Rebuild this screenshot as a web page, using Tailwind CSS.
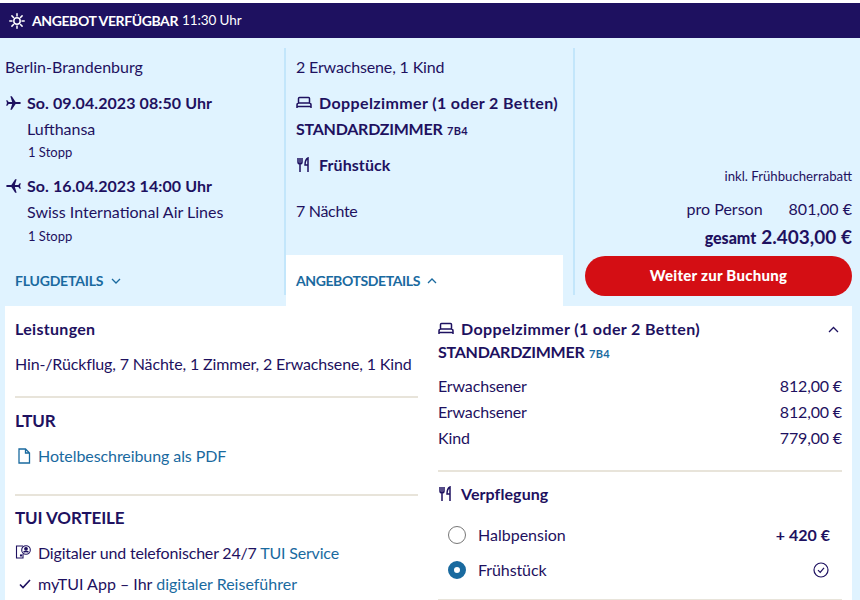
<!DOCTYPE html>
<html lang="de">
<head>
<meta charset="utf-8">
<script src="https://cdn.jsdelivr.net/npm/@tailwindcss/browser@4"></script>
</head>
<body class="bg-[#e0f3ff]">
<div class="w-[860px] h-[600px] overflow-hidden bg-[#e0f3ff] font-['Lato','Liberation_Sans',sans-serif] text-[16px] text-[#1e1160]">
  <div class="h-[3px] bg-white"></div>
  <div class="h-[35px] bg-[#1e1160] flex items-center pl-[9px] text-white text-[14px]">
    <svg class="w-[16px] h-[16px] mr-[7px]" viewBox="0 0 16 16" fill="none" stroke="white" stroke-width="1.500" stroke-linecap="round"><circle cx="8" cy="8" r="3.200"/><path d="M8 .8v2.200M8 13v2.200M.8 8H3M13 8h2.200M2.900 2.900l1.600 1.600M11.500 11.500l1.600 1.600M2.900 13.100l1.600-1.600M11.500 4.500l1.600-1.600"/></svg>
    <span class="font-bold tracking-[-0.4px]">ANGEBOT VERFÜGBAR</span><span class="ml-[4px] text-[13.5px] tracking-[-0.1px]">11:30 Uhr</span>
  </div>

  <div class="flex h-[268px]">
    <div class="w-[284px] pt-[19px] pl-[5px]">
      <div class="leading-[20px]">Berlin-Brandenburg</div>
      <div class="flex items-center font-bold mt-[16px] leading-[20px]">
        <svg class="w-[17px] h-[16px] mr-[5px]" viewBox="0 0 24 24" fill="#1e1160"><path d="M23 12c0-1-1-1.600-2.200-1.600h-5.600L9.500 2H7.300l2.700 8.400H4.700L2.800 8H1l1.200 4L1 16h1.800l1.900-2.400H10L7.300 22h2.200l5.700-8.400h5.600C22 13.600 23 13 23 12z"/></svg>
        <span class="tracking-[0.08px]">So. 09.04.2023 08:50 Uhr</span>
      </div>
      <div class="pl-[22px] mt-[6px] leading-[20px]">Lufthansa</div>
      <div class="pl-[23px] mt-[4px] leading-[18px] text-[13px]">1 Stopp</div>
      <div class="flex items-center font-bold mt-[15px] leading-[20px]">
        <svg class="w-[17px] h-[16px] mr-[5px]" viewBox="0 0 24 24" fill="#1e1160"><path d="M1 12c0-1 1-1.600 2.200-1.600h5.600L14.500 2h2.200L14 10.400h5.300L21.200 8H23l-1.200 4 1.200 4h-1.800l-1.900-2.400H14l2.700 8.400h-2.200L8.800 13.600H3.200C2 13.600 1 13 1 12z"/></svg>
        <span class="tracking-[0.08px]">So. 16.04.2023 14:00 Uhr</span>
      </div>
      <div class="pl-[22px] mt-[6px] leading-[20px]">Swiss International Air Lines</div>
      <div class="pl-[23px] mt-[5px] leading-[18px] text-[13px]">1 Stopp</div>
      <div class="mt-[26px] ml-[10px] flex items-center font-bold text-[14px] leading-[20px] tracking-[-0.2px] text-[#1a6a9f]">
        FLUGDETAILS
        <svg class="w-[10px] h-[6px] ml-[8px]" viewBox="0 0 10 6" fill="none" stroke="#1a6a9f" stroke-width="1.300"><path d="M1 1l4 4 4-4"/></svg>
      </div>
    </div>

    <div class="w-[291px] mt-[10px] border-l-2 border-r-2 border-[#c3e6fb] h-[247px] pl-[10px] pt-[9px]">
      <div class="leading-[20px] tracking-[-0.15px]">2 Erwachsene, 1 Kind</div>
      <div class="flex items-center font-bold mt-[16px] leading-[20px] tracking-[0.38px]">
        <svg class="w-[16px] h-[14px] mr-[7px]" viewBox="0 0 16 14" fill="none" stroke="#1e1160" stroke-width="1.500"><path d="M2.500 7V2.500a1 1 0 0 1 1-1h9a1 1 0 0 1 1 1V7M1 12V9a2 2 0 0 1 2-2h10a2 2 0 0 1 2 2v3M1 10.500h14"/></svg>
        Doppelzimmer (1 oder 2 Betten)
      </div>
      <div class="font-bold mt-[6px] leading-[20px] tracking-[-0.25px]">STANDARDZIMMER <span class="text-[11px] tracking-[0.3px] ml-[1px]">7B4</span></div>
      <div class="flex items-center font-bold mt-[14px] leading-[20px] tracking-[0.08px]">
        <svg class="w-[16px] h-[16px] mr-[7px]" viewBox="0 0 16 16" fill="none" stroke="#1e1160" stroke-width="1.500"><path d="M2 1v4a2 2 0 0 0 4 0V1M4 1v14M12 15V1c-2 1-3 3-3 7h3"/></svg>
        Frühstück
      </div>
      <div class="mt-[26px] leading-[20px] tracking-[-0.3px]">7 Nächte</div>
    </div>

    <div class="flex-1 flex flex-col items-end pr-[8px] pt-[129px]">
      <div class="text-[13.2px] leading-[18px]">inkl. Frühbucherrabatt</div>
      <div class="mt-[14px] leading-[20px] flex"><span>pro Person</span><span class="ml-[26px]">801,00 €</span></div>
      <div class="mt-[6px] leading-[24px] font-black flex items-baseline"><span>gesamt</span><span class="ml-[5px] text-[19px] font-bold">2.403,00 €</span></div>
      <div class="mt-[6px] w-[267px] h-[40px] rounded-full bg-[#d40e14] text-white font-black text-[15px] tracking-[0.25px] flex items-center justify-center pb-[1px]">Weiter zur Buchung</div>
    </div>
  </div>

  <div class="ml-[286px] -mt-[51px] h-[51px] w-[277px] bg-white pl-[10px] pt-[16px] flex items-start relative">
    <div class="flex items-center font-bold text-[14px] text-[#1a6a9f] leading-[20px] tracking-[-0.4px]">
      ANGEBOTSDETAILS
      <svg class="w-[10px] h-[6px] ml-[7px]" viewBox="0 0 10 6" fill="none" stroke="#1a6a9f" stroke-width="1.300"><path d="M1 5l4-4 4 4"/></svg>
    </div>
  </div>

  <div class="ml-[5px] w-[847px] bg-white h-[294px] flex px-[10px]">
    <div class="w-[403px] pt-[13px]">
      <div class="font-bold leading-[20px] tracking-[0.3px]">Leistungen</div>
      <div class="mt-[14px] leading-[22px] tracking-[-0.14px] whitespace-nowrap">Hin-/Rückflug, 7 Nächte, 1 Zimmer, 2 Erwachsene, 1 Kind</div>
      <div class="h-[2px] bg-[#e8e4da] mt-[21px]"></div>
      <div class="font-bold mt-[12px] leading-[22px] text-[17px] tracking-[-0.1px]">LTUR</div>
      <div class="flex items-center mt-[13px] leading-[22px] text-[#1a6a9f] tracking-[-0.08px]">
        <svg class="w-[14px] h-[16px] ml-[2px] mr-[7px]" viewBox="0 0 14 16" fill="none" stroke="#1a6a9f" stroke-width="1.300"><path d="M2 1h6.500L12.500 5v10H2zM8.500 1v4h4"/></svg>
        Hotelbeschreibung als PDF
      </div>
      <div class="h-[2px] bg-[#e8e4da] mt-[27px]"></div>
      <div class="font-bold mt-[11px] leading-[22px] text-[17px] tracking-[-0.1px]">TUI VORTEILE</div>
      <div class="flex items-center mt-[13px] leading-[22px] tracking-[-0.18px]">
        <svg class="w-[16px] h-[16px] mr-[7px] -mt-[3px]" viewBox="0 0 16 16" fill="none" stroke="#1e1160" stroke-width="1.100"><path d="M8 2H1.500v12H8V10"/><circle cx="6" cy="11.500" r=".6"/><circle cx="11" cy="6" r="4.300"/><circle cx="11" cy="4.800" r="1.300" fill="#1e1160"/><path d="M8.500 8.300c.5-1.300 4.500-1.300 5 0" fill="#1e1160"/></svg>
        <span>Digitaler und telefonischer 24/7 <span class="text-[#1a6a9f]">TUI Service</span></span>
      </div>
      <div class="flex items-center mt-[9px] leading-[22px]">
        <svg class="w-[12px] h-[10px] ml-[4px] mr-[7px]" viewBox="0 0 12 10" fill="none" stroke="#1e1160" stroke-width="1.600"><path d="M1 5.500l3 3L11 1"/></svg>
        <span>myTUI App – Ihr <span class="text-[#1a6a9f]">digitaler Reiseführer</span></span>
      </div>
    </div>

    <div class="flex-1 ml-[20px] pt-[13px]">
      <div class="flex items-center font-bold leading-[20px] tracking-[0.38px]">
        <svg class="w-[16px] h-[14px] mr-[7px]" viewBox="0 0 16 14" fill="none" stroke="#1e1160" stroke-width="1.500"><path d="M2.500 7V2.500a1 1 0 0 1 1-1h9a1 1 0 0 1 1 1V7M1 12V9a2 2 0 0 1 2-2h10a2 2 0 0 1 2 2v3M1 10.500h14"/></svg>
        Doppelzimmer (1 oder 2 Betten)
        <svg class="w-[11px] h-[7px] ml-auto mr-[3px]" viewBox="0 0 11 7" fill="none" stroke="#1e1160" stroke-width="1.300"><path d="M1 6l4.500-4.500L10 6"/></svg>
      </div>
      <div class="font-bold mt-[3px] leading-[20px] tracking-[-0.25px]">STANDARDZIMMER <span class="text-[11px] tracking-[0.3px] text-[#1a6a9f] ml-[1px]">7B4</span></div>
      <div class="mt-[12px] flex justify-between leading-[20px] tracking-[-0.15px]"><span>Erwachsener</span><span>812,00 €</span></div>
      <div class="mt-[6px] flex justify-between leading-[20px] tracking-[-0.15px]"><span>Erwachsener</span><span>812,00 €</span></div>
      <div class="mt-[6px] flex justify-between leading-[20px] tracking-[-0.15px]"><span>Kind</span><span>779,00 €</span></div>
      <div class="h-[2px] bg-[#e8e4da] mt-[22px]"></div>
      <div class="flex items-center font-bold mt-[12px] leading-[20px] tracking-[0.08px]">
        <svg class="w-[16px] h-[16px] mr-[7px]" viewBox="0 0 16 16" fill="none" stroke="#1e1160" stroke-width="1.500"><path d="M2 1v4a2 2 0 0 0 4 0V1M4 1v14M12 15V1c-2 1-3 3-3 7h3"/></svg>
        Verpflegung
      </div>
      <div class="flex items-center mt-[20px] leading-[22px] pl-[10px] pr-[12px]">
        <span class="w-[18px] h-[18px] rounded-full border border-[#777] bg-white mr-[12px]"></span>
        <span>Halbpension</span><span class="ml-auto font-bold">+ 420 €</span>
      </div>
      <div class="flex items-center mt-[13px] leading-[22px] pl-[10px] pr-[13px]">
        <span class="w-[18px] h-[18px] rounded-full border-[6px] border-[#1a6a9f] bg-white mr-[12px]"></span>
        <span class="tracking-[-0.1px]">Frühstück</span>
        <svg class="w-[16px] h-[16px] ml-auto" viewBox="0 0 16 16" fill="none" stroke="#1e1160" stroke-width="1.200"><circle cx="8" cy="8" r="7"/><path d="M5 8.200l2.200 2.200L11 5.800"/></svg>
      </div>
      <div class="h-[2px] bg-[#e8e4da] mt-[18px]"></div>
    </div>
  </div>
</div>
</body>
</html>
